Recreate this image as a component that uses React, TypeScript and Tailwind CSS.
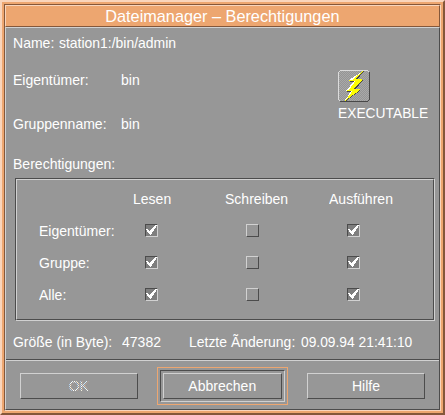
import type { ReactNode } from "react";

/** Label text in the narrow desktop face. */
function Label({ children, className = "scale-x-[.935]" }: { children: ReactNode; className?: string }) {
  return (
    <span className={`block h-[17px] origin-left whitespace-pre leading-[17px] ${className}`}>
      {children}
    </span>
  );
}

function Check({ on, className = "" }: { on: boolean; className?: string }) {
  return (
    <div
      className={`mt-[2px] size-[13px] border ${
        on
          ? "border-t-[#4c4c4c] border-l-[#4c4c4c] border-r-[#d1d1d1] border-b-[#d1d1d1] bg-[#7e7e7e]"
          : "border-t-[#d1d1d1] border-l-[#d1d1d1] border-r-[#4c4c4c] border-b-[#4c4c4c]"
      } ${className}`}
    >
      {on && (
        <svg width="11" height="11" viewBox="1 1 11 11" shapeRendering="crispEdges">
          <path fill="#fff" d="M1 6V5H3V6H4V7H5V6H6V5H7V4H8V3H9V2H10V1H12V2H11V4H10V5H9V7H8V8H7V10H6V11H5V10H4V9H3V8H2V6Z" />
        </svg>
      )}
    </div>
  );
}

function Bolt() {
  return (
    <svg width="32" height="32" viewBox="0 0 32 32" shapeRendering="crispEdges">
      <defs>
        <pattern id="dither" width="2" height="2" patternUnits="userSpaceOnUse">
          <rect width="2" height="2" fill="#959595" />
          <rect width="1" height="1" fill="#a8a8a8" />
          <rect x="1" y="1" width="1" height="1" fill="#a8a8a8" />
        </pattern>
      </defs>
      <path fill="url(#dither)" d="M1 1H31V31H1Z" />
      <path fill="#dcdcdc" d="M2 0H30V1H2ZM0 2H1V30H0ZM1 1H2V2H1ZM30 1H31V2H30ZM1 30H2V31H1Z" />
      <path fill="#484848" d="M31 2H32V30H31ZM2 31H30V32H2ZM30 30H31V31H30Z" />
      <path fill="#484848" d="M26 1L19 10H25L17 20H23L8 31L14 22H9L17 12H11Z" />
      <path fill="#fff" d="M25 1L11 11H16L8 21H13L7 31L20 20H14L22 10H17Z" />
      <path fill="#ff0" d="M25 1L14 10H11V11H17L11 20H9V21H14L7 31L22 20V19H16L24 10V9H18Z" />
      <path fill="#fff" d="M22 3L11 10H13L21 4ZM16 12L8 20H10L16 13ZM13 22L7 30H8L13 23Z" />
    </svg>
  );
}

const raised = "border border-t-[#d1d1d1] border-l-[#d1d1d1] border-r-[#4c4c4c] border-b-[#4c4c4c]";
const sunken = "border border-t-[#4c4c4c] border-l-[#4c4c4c] border-r-[#d1d1d1] border-b-[#d1d1d1]";

function Button({
  children,
  disabled = false,
  className = "w-[118px]",
}: {
  children: ReactNode;
  disabled?: boolean;
  className?: string;
}) {
  return (
    <button disabled={disabled} className={`relative flex h-[26px] justify-center pt-[3px] ${raised} ${className}`}>
      <span className="block origin-center scale-x-[.935] leading-[17px]">{children}</span>
      {/* Stipple over the caption of an insensitive button */}
      {disabled && (
        <span className="absolute inset-0 bg-[repeating-conic-gradient(#979797_0_25%,transparent_0_50%)] bg-[length:2px_2px]" />
      )}
    </button>
  );
}

const rows = [
  { name: "Eigentümer:", read: true, write: false, run: true },
  { name: "Gruppe:", read: true, write: false, run: true },
  { name: "Alle:", read: true, write: false, run: true },
];

export default function App() {
  return (
    <div className="h-[415px] w-[445px] border-2 border-t-[#f9d5bc] border-l-[#f9d5bc] border-r-[#84573a] border-b-[#84573a] bg-[#eda670] p-[2px] font-['Liberation_Sans',Arial,sans-serif] text-[15px] text-white">
      <div className="h-[407px] w-[437px] border border-t-[#84573a] border-l-[#84573a] border-r-[#f9d5bc] border-b-[#f9d5bc]">
        <div className="h-[22px] border border-t-[#f9d5bc] border-l-[#f9d5bc] border-r-[#84573a] border-b-[#84573a] pt-px text-center text-[17px] leading-[19px]">
          <span className="inline-block scale-x-[.957] whitespace-nowrap">Dateimanager – Berechtigungen</span>
        </div>

        <div className={`flex h-[383px] flex-col bg-[#979797] ${raised}`}>
          <div className="flex h-[37px] pl-[7px] pt-[6px]">
            <Label className="w-[46px] scale-x-[.935]">Name:</Label>
            <Label className="scale-x-[.93]">station1:/bin/admin</Label>
          </div>

          <div className="flex h-[84px]">
            <div className="w-[326px] pl-[7px] pt-[6px]">
              <div className="flex h-[44px]">
                <Label className="w-[108px] scale-x-[.935]">Eigentümer:</Label>
                <Label>bin</Label>
              </div>
              <div className="flex">
                <Label className="w-[108px] scale-x-[.935]">Gruppenname:</Label>
                <Label>bin</Label>
              </div>
            </div>
            <div className="pl-[6px] pt-[5px]">
              <Bolt />
              <Label className="mt-[2px] w-[98px] scale-x-[.92]">EXECUTABLE</Label>
            </div>
          </div>

          <div className="h-[29px] pl-[7px] pt-[6px]">
            <Label>Berechtigungen:</Label>
          </div>

          <div className={`ml-[9px] h-[143px] w-[420px] ${sunken}`}>
            <div className={`h-[141px] pl-[22px] pt-[10px] ${raised}`}>
              <div className="grid h-[32px] grid-cols-[94px_92px_104px_90px]">
                <span />
                <Label>Lesen</Label>
                <Label>Schreiben</Label>
                <Label>Ausführen</Label>
              </div>
              {rows.map((r) => (
                <div key={r.name} className="grid h-[32px] grid-cols-[94px_92px_104px_90px]">
                  <Label>{r.name}</Label>
                  <Check on={r.read} className="ml-[12px]" />
                  <Check on={r.write} className="ml-[21px]" />
                  <Check on={r.run} className="ml-[18px]" />
                </div>
              ))}
            </div>
          </div>

          <div className="flex h-[38px] pl-[7px] pt-[12px]">
            <Label className="w-[109px] scale-x-[.93]">Größe (in Byte):</Label>
            <Label className="w-[67px] scale-x-[.935]">47382</Label>
            <Label className="w-[112px] scale-x-[.93]">Letzte Ãnderung:</Label>
            <Label className="scale-x-[.92]">09.09.94 21:41:10</Label>
          </div>

          <div className="h-[2px] border-t border-b border-t-[#4c4c4c] border-b-[#d1d1d1]" />

          <div className="flex pl-[14px] pt-[6px]">
            <Button disabled className="mt-[6px] w-[118px]">
              OK
            </Button>
            <div className="ml-[19px] h-[38px] w-[131px] border border-[#eda670] p-[2px]">
              <div className={`h-[32px] w-[125px] p-[2px] ${sunken}`}>
                <Button className="w-[119px]">Abbrechen</Button>
              </div>
            </div>
            <Button className="ml-[19px] mt-[6px] w-[118px]">Hilfe</Button>
          </div>
        </div>
      </div>
    </div>
  );
}
